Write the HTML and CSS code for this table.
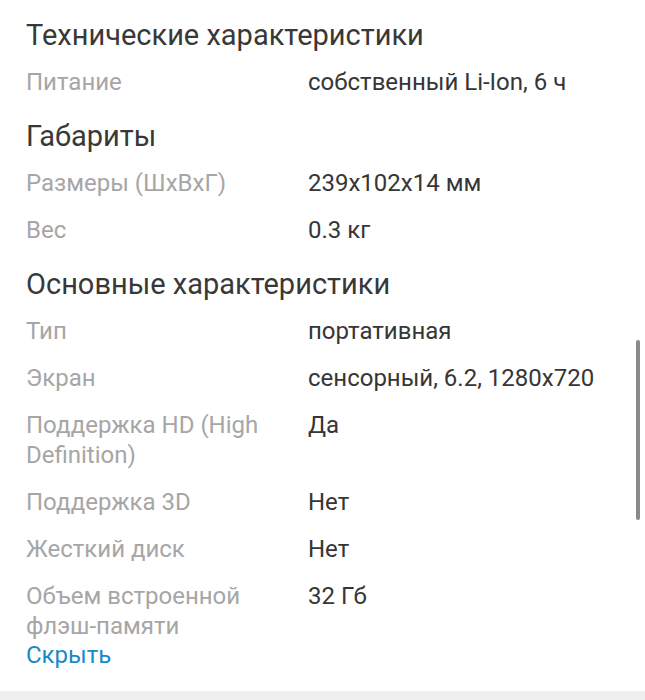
FILE: index.html
```html
<!DOCTYPE html>
<html lang="ru">
<head>
<meta charset="utf-8">
<link rel="stylesheet" href="styles.css">
</head>
<body>
<div class="specs">
  <section class="group">
    <h2 class="group-title">Технические характеристики</h2>
    <div class="row"><div class="label">Питание</div><div class="value">собственный Li-Ion, 6 ч</div></div>
  </section>
  <section class="group">
    <h2 class="group-title">Габариты</h2>
    <div class="row"><div class="label">Размеры (ШхВхГ)</div><div class="value">239x102x14 мм</div></div>
    <div class="row"><div class="label">Вес</div><div class="value">0.3 кг</div></div>
  </section>
  <section class="group">
    <h2 class="group-title">Основные характеристики</h2>
    <div class="row"><div class="label">Тип</div><div class="value">портативная</div></div>
    <div class="row"><div class="label">Экран</div><div class="value">сенсорный, 6.2, 1280x720</div></div>
    <div class="row"><div class="label">Поддержка HD (High Definition)</div><div class="value">Да</div></div>
    <div class="row"><div class="label">Поддержка 3D</div><div class="value">Нет</div></div>
    <div class="row"><div class="label">Жесткий диск</div><div class="value">Нет</div></div>
    <div class="row"><div class="label">Объем встроенной флэш-памяти</div><div class="value">32 Гб</div></div>
  </section>
  <a class="toggle" href="#">Скрыть</a>
</div>
<div class="footer-strip"></div>
<div class="scrollbar"></div>
</body>
</html>
```
FILE: styles.css
```css
html, body {
  margin: 0;
  padding: 0;
  background: #ffffff;
}
body {
  font-family: Roboto, "Noto Sans", sans-serif;
  width: 645px;
  height: 700px;
  overflow: hidden;
  position: relative;
}
.specs {
  display: flex;
  flex-direction: column;
  padding: 17px 20px 22px 26px;
}
.group {
  display: flex;
  flex-direction: column;
  margin-bottom: 21px;
}
.group:last-of-type {
  margin-bottom: 0;
}
.group-title {
  margin: 0 0 14px 0;
  font-size: 29px;
  line-height: 36px;
  font-weight: 400;
  color: #383838;
}
.row {
  display: grid;
  grid-template-columns: 282px 1fr;
  font-size: 24px;
  line-height: 30px;
}
.row + .row {
  margin-top: 17px;
}
.label {
  color: #a6a6a6;
  padding-right: 16px;
}
.value {
  color: #363636;
}
.toggle {
  display: block;
  font-size: 24px;
  line-height: 28px;
  color: #1a88c9;
  text-decoration: none;
}
.footer-strip {
  height: 30px;
  background: #efefef;
}
.scrollbar {
  position: absolute;
  right: 5px;
  top: 340px;
  width: 4px;
  height: 180px;
  border-radius: 2px;
  background: #8a8a8a;
}
```
